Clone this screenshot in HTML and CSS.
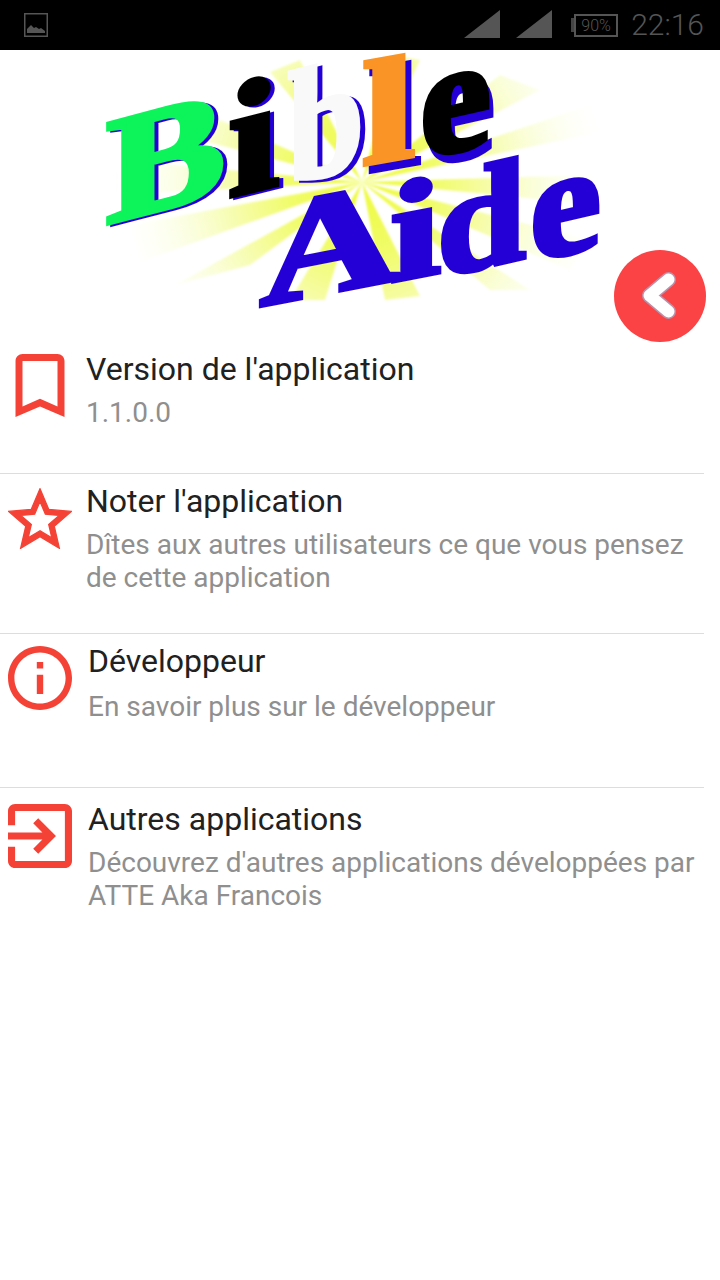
FILE: index.html
```html
<!DOCTYPE html>
<html lang="fr">
<head>
  <meta charset="UTF-8">
  <meta name="viewport" content="width=device-width, initial-scale=1.0">
  <title>Bible Aide</title>
  <link rel="stylesheet" href="styles.css">
</head>
<body>
  <header class="status-bar">
    <svg class="status-image" viewBox="0 0 24 24" width="24" height="24">
      <rect x="0.75" y="0.75" width="22.5" height="22.5" fill="none" stroke="#555" stroke-width="1.5"/>
      <path d="M3 20v-4l4-4 3 3 2-1 3 2 2-1 4 3v2z" fill="#555"/>
    </svg>
    <div class="status-right">
      <svg class="signal" viewBox="0 0 36 28" width="36" height="28"><path d="M0 28L36 0v28z"/></svg>
      <svg class="signal" viewBox="0 0 36 28" width="36" height="28"><path d="M0 28L36 0v28z"/></svg>
      <div class="battery">
        <span class="battery-tip"></span>
        <span class="battery-body">90%</span>
      </div>
      <span class="clock">22:16</span>
    </div>
  </header>

  <main class="main-content">
    <div class="logo">
      <svg class="logo-art" viewBox="0 50 720 290" width="720" height="290">
        <defs>
          <radialGradient id="burst" gradientUnits="userSpaceOnUse" cx="362" cy="182" r="245">
            <stop offset="0" stop-color="#eefb3c"/>
            <stop offset="0.3" stop-color="#f1fc6a"/>
            <stop offset="0.6" stop-color="#f8fdc0"/>
            <stop offset="1" stop-color="#fdfff0" stop-opacity="0"/>
          </radialGradient>
          <filter id="soft"><feGaussianBlur stdDeviation="1"/></filter>
        </defs>
        <g fill="url(#burst)" filter="url(#soft)">
          <path d="M362 182L130 225L140 262z"/>
          <path d="M362 182L175 285L250 265z"/>
          <path d="M362 182L290 300L325 300z"/>
          <path d="M362 182L385 300L420 296z"/>
          <path d="M362 182L490 290L530 290z"/>
          <path d="M362 182L600 205L590 175z"/>
          <path d="M362 182L610 130L590 105z"/>
          <path d="M362 182L540 90L500 75z"/>
          <path d="M362 182L420 60L395 55z"/>
          <path d="M362 182L300 60L270 72z"/>
          <path d="M362 182L220 120L200 140z"/>
          <path d="M362 182L120 160L110 195z"/>
          <path d="M362 182L590 240L570 270z"/>
        </g>

        <text class="logo-letter blue" transform="translate(110 225) skewY(-15) scale(1.12 0.95)">B</text>
        <text class="logo-letter green" transform="translate(106 224) skewY(-15) scale(1.12 0.95)">B</text>
        <text class="logo-letter blue" transform="translate(232 198) skewY(-14) scale(1.15 1)">i</text>
        <text class="logo-letter black" transform="translate(228 197) skewY(-14) scale(1.15 1)">i</text>
        <text class="logo-letter blue" transform="translate(293 186) skewY(-14) scale(0.85 1)">b</text>
        <text class="logo-letter white" transform="translate(288 184) skewY(-14) scale(0.85 1)">b</text>
        <text class="logo-letter blue" transform="translate(368 172) skewY(-10) scale(1.2 0.92)">l</text>
        <text class="logo-letter orange" transform="translate(362 165) skewY(-10) scale(1.2 0.92)">l</text>
        <text class="logo-letter blue" transform="translate(424 167) skewY(-13)">e</text>
        <text class="logo-letter black" transform="translate(420 159) skewY(-13)">e</text>

        <text class="logo-letter blue" transform="translate(260 306) skewY(-11) scale(1.2 0.92)">A</text>
        <text class="logo-letter blue" transform="translate(390 282) skewY(-11) scale(1.15 0.88)">i</text>
        <text class="logo-letter blue" transform="translate(437 278) skewY(-13) scale(1 0.92)">d</text>
        <text class="logo-letter blue" transform="translate(530 262) skewY(-13) scale(1 0.96)">e</text>
      </svg>
      <button class="back-btn" type="button" aria-label="Retour">
        <svg viewBox="0 0 92 92" width="92" height="92">
          <path class="back-edge" d="M54.500 29.500L35.500 45.500L54.500 61.500"/>
          <path class="back-chevron" d="M54.500 29.500L35.500 45.500L54.500 61.500"/>
        </svg>
      </button>
    </div>

    <section class="row row-version">
      <div class="row-icon">
        <svg viewBox="5 3 14 18" width="50" height="63"><path d="M17 3H7c-1.100 0-1.990.9-1.990 2L5 21l7-3 7 3V5c0-1.100-.9-2-2-2zm0 15l-5-2.180L7 18V5h10v13z"/></svg>
      </div>
      <div class="row-text">
        <h2 class="row-title">Version de l'application</h2>
        <p class="row-sub">1.1.0.0</p>
      </div>
    </section>

    <section class="row row-rate">
      <div class="row-icon">
        <svg class="star-icon" viewBox="1.800 1.800 20.400 19.400" width="64" height="61"><path d="M22 9.240l-7.190-.62L12 2 9.190 8.630 2 9.240l5.460 4.730L5.820 21 12 17.270 18.180 21l-1.630-7.030L22 9.240zM12 15.400l-3.760 2.270 1-4.280-3.320-2.880 4.380-.38L12 6.100l1.710 4.040 4.380.38-3.320 2.880 1 4.280L12 15.400z"/></svg>
      </div>
      <div class="row-text">
        <h2 class="row-title">Noter l'application</h2>
        <p class="row-sub">Dîtes aux autres utilisateurs ce que vous pensez de cette application</p>
      </div>
    </section>

    <section class="row row-dev">
      <div class="row-icon">
        <svg viewBox="2 2 20 20" width="64" height="64"><path d="M11 7h2v2h-2zm0 4h2v6h-2zm1-9C6.480 2 2 6.480 2 12s4.480 10 10 10 10-4.480 10-10S17.520 2 12 2zm0 18c-4.410 0-8-3.590-8-8s3.590-8 8-8 8 3.590 8 8-3.590 8-8 8z"/></svg>
      </div>
      <div class="row-text">
        <h2 class="row-title">Développeur</h2>
        <p class="row-sub">En savoir plus sur le développeur</p>
      </div>
    </section>

    <section class="row row-apps">
      <div class="row-icon">
        <svg viewBox="3 3 18 18" width="64" height="64"><path d="M10.090 15.590L11.500 17l5-5-5-5-1.410 1.410L12.670 11H3v2h9.670l-2.580 2.590zM19 3H5c-1.110 0-2 .9-2 2v4h2V5h14v14H5v-4H3v4c0 1.100.89 2 2 2h14c1.100 0 2-.9 2-2V5c0-1.100-.9-2-2-2z"/></svg>
      </div>
      <div class="row-text">
        <h2 class="row-title">Autres applications</h2>
        <p class="row-sub">Découvrez d'autres applications développées par ATTE Aka Francois</p>
      </div>
    </section>
  </main>
</body>
</html>
```

FILE: styles.css
```css
* {
  margin: 0;
  padding: 0;
  box-sizing: border-box;
}

body {
  font-family: Roboto, sans-serif;
  background-color: #fff;
  color: #212121;
  width: 720px;
  height: 1280px;
  overflow: hidden;
}

.status-bar {
  height: 50px;
  background-color: #000;
  display: flex;
  align-items: center;
  justify-content: space-between;
  padding: 0 16px 0 24px;
}

.status-right {
  display: flex;
  align-items: center;
}

.signal {
  fill: #555;
  margin-right: 16px;
  margin-top: -2px;
}

.signal + .signal {
  margin-right: 19px;
}

.battery {
  display: flex;
  align-items: center;
  margin-right: 13px;
}

.battery-tip {
  width: 3px;
  height: 14px;
  background-color: #444;
}

.battery-body {
  width: 44px;
  height: 23px;
  border: 2px solid #555;
  color: #555;
  font-size: 16px;
  font-weight: 300;
  line-height: 19px;
  text-align: center;
}

.clock {
  color: #555;
  font-size: 30px;
  font-weight: 300;
  line-height: 50px;
}

.logo {
  position: relative;
  height: 290px;
}

.logo-art {
  display: block;
  overflow: visible;
}

.logo-letter {
  font-family: "Liberation Serif", serif;
  font-weight: bold;
  font-size: 160px;
  stroke-width: 5px;
  stroke-linejoin: miter;
}

.blue { fill: #2400d6; stroke: #2400d6; }
.green { fill: #0cf45a; stroke: #0cf45a; }
.black { fill: #000; stroke: #000; }
.white { fill: #f9f9f9; stroke: #f9f9f9; }
.orange { fill: #fb9426; stroke: #fb9426; }

.back-btn {
  position: absolute;
  left: 614px;
  top: 200px;
  width: 92px;
  height: 92px;
  border: none;
  border-radius: 50%;
  background-color: #fb4244;
}

.back-btn svg {
  display: block;
}

.back-chevron,
.back-edge {
  fill: none;
  stroke-linecap: round;
  stroke-linejoin: round;
}

.back-chevron {
  stroke: #fff;
  stroke-width: 12;
}

.back-edge {
  stroke: #a9a6c4;
  stroke-width: 15;
  opacity: 0.8;
}

.row {
  display: flex;
  align-items: flex-start;
  width: 704px;
  border-bottom: 1px solid #ddd;
}

.row-icon {
  width: 80px;
  flex-shrink: 0;
  display: flex;
  justify-content: center;
}

.row-icon svg {
  display: block;
  fill: #f44336;
}

.row-icon .star-icon {
  stroke: #f44336;
  stroke-width: 0.4;
}

.row-text {
  flex: 1;
  margin-left: 6px;
}

.row-title {
  font-size: 32px;
  font-weight: 400;
  line-height: 36px;
  color: #212121;
}

.row-sub {
  font-size: 28px;
  line-height: 33px;
  margin-top: 9px;
  color: #8f8f8f;
}

.row-version {
  height: 134px;
}

.row-version .row-icon {
  padding-top: 14px;
}

.row-version .row-text {
  padding-top: 11px;
}

.row-rate {
  height: 160px;
}

.row-rate .row-icon {
  padding-top: 14px;
}

.row-rate .row-text {
  padding-top: 9px;
}

.row-dev {
  height: 154px;
}

.row-dev .row-icon {
  padding-top: 12px;
}

.row-dev .row-text {
  padding-top: 9px;
  margin-left: 8px;
}

.row-dev .row-sub {
  margin-top: 11px;
}

.row-apps {
  border-bottom: none;
  width: 720px;
}

.row-apps .row-icon {
  padding-top: 16px;
}

.row-apps .row-text {
  padding-top: 13px;
  margin-left: 8px;
}
```
